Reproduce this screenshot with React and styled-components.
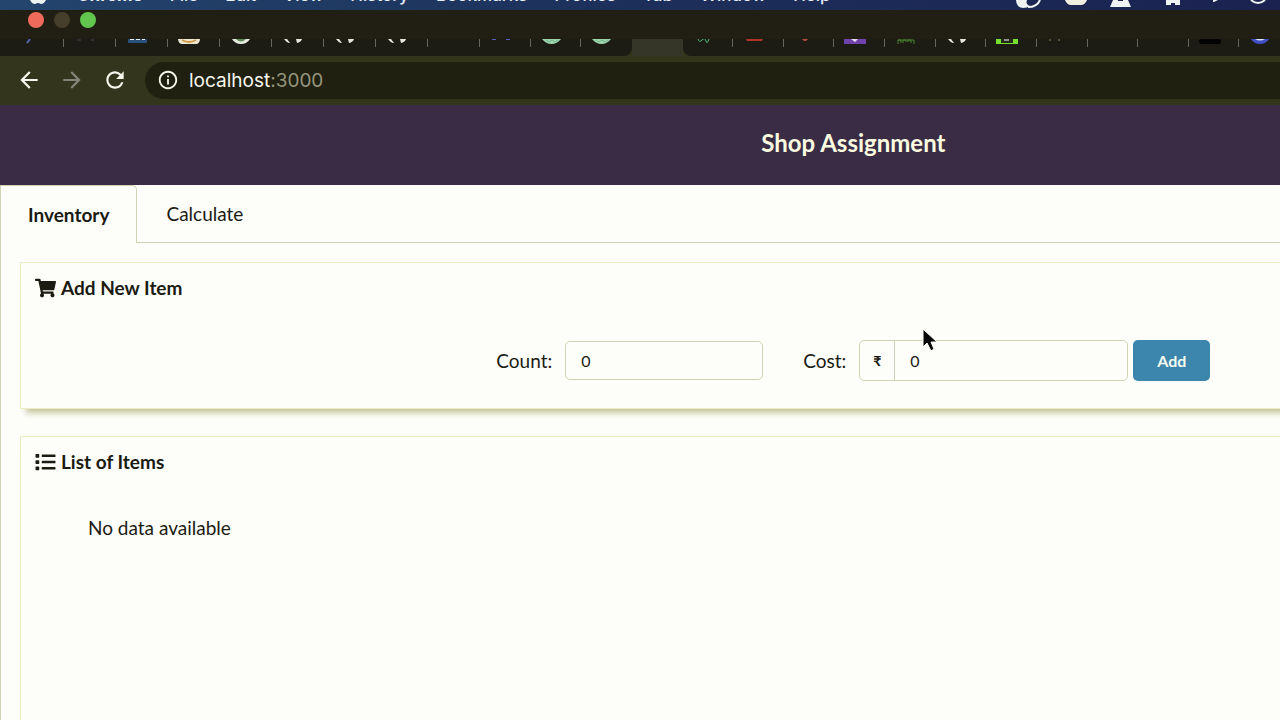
import React from "react";
import styled, { createGlobalStyle, css } from "styled-components";
import { FaShoppingCart, FaList } from "react-icons/fa";
import { MdArrowBack, MdArrowForward, MdRefresh, MdInfoOutline } from "react-icons/md";

const colors = {
  menu: "#1c2f5a",
  titleBar: "#211e14",
  tab: "#1c1c14",
  toolbar: "#33361c",
  address: "#1f2010",
  header: "#392c44",
  page: "#fdfdfa",
  line: "#d2d2b4",
  panelLine: "#ededc4",
  ink: "#1b1b12",
  blue: "#3c85ac",
};

const GlobalStyle = createGlobalStyle`
  *, *::before, *::after { box-sizing: border-box; }
  html, body, #root { height: 100%; }
  body { margin: 0; overflow: hidden; background: ${colors.page}; }
`;

const Screen = styled.div`
  position: relative;
  display: flex;
  flex-direction: column;
  min-height: 100%;
  overflow: hidden;
  font-family: Lato, sans-serif;
  font-size: 19px;
  color: ${colors.ink};
`;

const MenuBar = styled.nav`
  display: flex;
  flex: none;
  align-items: flex-end;
  gap: 27px;
  height: 10px;
  padding: 0 14px 0 30px;
  overflow: hidden;
  background: linear-gradient(90deg, #23456e, ${colors.menu} 50%, #1b2250);
  font-family: Inter, sans-serif;
`;

const MenuItem = styled.span`
  padding-bottom: 3px;
  font-size: 17px;
  font-weight: ${(p) => (p.$strong ? 700 : 500)};
  line-height: 24px;
  color: #e6eef4;
  white-space: nowrap;
`;

const StatusIcons = styled.div`
  display: flex;
  align-self: flex-start;
  gap: 23px;
  margin-left: auto;
`;

const Drawing = styled.svg`
  display: block;
  flex: none;
`;

const AppleMark = styled(Drawing)`
  align-self: flex-start;
`;

const TitleBar = styled.div`
  display: flex;
  flex: none;
  gap: 10px;
  height: 29px;
  padding: 2px 28px;
  background: ${colors.titleBar};
`;

const WindowDot = styled.button`
  width: 16px;
  height: 16px;
  padding: 0;
  border: 0;
  border-radius: 50%;
  background: ${(p) => p.$color};
`;

const TabStrip = styled.div`
  display: flex;
  flex: none;
  height: 17px;
  background: ${colors.toolbar};
`;

const TabGroup = styled.div`
  display: flex;
  flex: ${(p) => (p.$fill ? "1" : "none")};
  margin-right: ${(p) => (p.$fill ? "-10px" : "0")};
  padding-left: ${(p) => (p.$fill ? "0" : "12px")};
  background: ${(p) => (p.$fill ? "transparent" : colors.tab)};
`;

const BrowserTab = styled.div`
  display: flex;
  align-items: flex-start;
  flex: ${(p) => (p.$fill ? "1 0 0" : "0 0 52px")};
  padding-left: 10px;
  background: ${colors.tab};
  ${(p) => p.$active && css`background: #353528;`}
  ${(p) => p.$before && css`border-bottom-right-radius: 8px;`}
  ${(p) => p.$after && css`border-bottom-left-radius: 8px;`}
`;

const TabDivider = styled.span`
  width: 1px;
  height: 8px;
  margin-left: auto;
  background: #65655a;
`;

const Toolbar = styled.div`
  display: flex;
  flex: none;
  align-items: center;
  gap: 17px;
  height: 49px;
  padding: 0 0 1px 16px;
  background: ${colors.toolbar};
`;

const ToolButton = styled.button`
  display: flex;
  padding: 0;
  border: 0;
  background: none;
  font-size: 26px;
  color: ${(p) => (p.$muted ? "#85857c" : "#f6f6ee")};
`;

const AddressBar = styled.div`
  display: flex;
  flex: 1;
  align-items: center;
  gap: 10px;
  height: 37px;
  padding-left: 12px;
  border-radius: 19px 0 0 19px;
  background: ${colors.address};
  font-family: Inter, sans-serif;
  font-size: 19px;
  color: #f8f8ee;
  svg { font-size: 22px; }
`;

const Port = styled.span`
  color: #96967c;
`;

/* The page is laid out wider than the visible window. */
const Page = styled.main`
  display: flex;
  flex: 1;
  flex-direction: column;
  width: calc(100% * 4 / 3);
  background: ${colors.page};
`;

const PageHeader = styled.header`
  display: flex;
  flex: none;
  align-items: center;
  justify-content: center;
  height: 80px;
  padding-bottom: 4px;
  background: ${colors.header};
`;

const PageTitle = styled.h1`
  margin: 0;
  font-size: 24px;
  font-weight: 700;
  line-height: 32px;
  color: #fbfbe0;
`;

const PageTabs = styled.div`
  display: flex;
  flex: none;
  height: 58px;
  border-left: 1px solid ${colors.line};
`;

const PageTab = styled.button`
  padding: 0 27px 0 ${(p) => (p.$active ? "27px" : "29px")};
  border: 0 solid ${colors.line};
  border-width: ${(p) => (p.$active ? "1px 1px 0 0" : "0 0 1px 0")};
  border-radius: ${(p) => (p.$active ? "0 5px 0 0" : "0")};
  background: none;
  font: inherit;
  font-weight: ${(p) => (p.$active ? 700 : 400)};
  color: inherit;
`;

const TabsRule = styled.div`
  flex: 1;
  border-bottom: 1px solid ${colors.line};
`;

const Content = styled.div`
  display: flex;
  flex: 1;
  flex-direction: column;
  gap: 27px;
  padding: 19px 20px 0 19px;
  border-left: 1px solid ${colors.line};
`;

const Panel = styled.section`
  flex: ${(p) => (p.$fill ? "1 0 320px" : "none")};
  padding: 13px 14px 27px;
  border: 1px solid ${colors.panelLine};
  box-shadow: 0 10px 6px -6px #c4c49a;
`;

const PanelTitle = styled.h2`
  display: flex;
  align-items: center;
  gap: 5px;
  margin: 0;
  font-size: 19px;
  font-weight: 700;
  line-height: 24px;
  svg { width: 21px; height: 20px; }
`;

const ItemForm = styled.form`
  display: flex;
  align-items: center;
  justify-content: center;
  margin-top: 40px;
`;

const Field = styled.div`
  display: flex;
  align-items: center;
  gap: 13px;
  margin-right: ${(p) => (p.$wide ? "40px" : "5px")};
`;

const TextInput = styled.input`
  width: 198px;
  height: 39px;
  padding: 0 15px;
  border: 1px solid ${colors.line};
  border-radius: 5px;
  outline: 0;
  background: ${colors.page};
  font: 16px Lato, sans-serif;
  color: inherit;
`;

const MoneyGroup = styled.div`
  display: flex;
  height: 41px;
  border: 1px solid ${colors.line};
  border-radius: 5px;
  ${TextInput} {
    width: 233px;
    border-width: 0 0 0 1px;
    border-radius: 0 5px 5px 0;
  }
`;

const Currency = styled.span`
  width: 34px;
  font-size: 14px;
  font-weight: 700;
  line-height: 40px;
  text-align: center;
`;

const AddButton = styled.button`
  width: 77px;
  height: 41px;
  padding: 0;
  border: 0;
  border-radius: 5px;
  background: ${colors.blue};
  font: 700 16px Lato, sans-serif;
  color: #f6fbf0;
`;

const EmptyMessage = styled.p`
  margin: 42px 53px;
  line-height: 24px;
`;

const Pointer = styled(Drawing)`
  position: absolute;
  top: 328px;
  left: 922px;
`;

const favicons = {
  pen: <path d="M5 4 8 0" stroke="#5665b0" strokeWidth="2" />,
  faint: <path d="M3 1h4M17 1h3" stroke="#543850" strokeWidth="1" />,
  book: (
    <>
      <rect x="2" width="19" height="4" rx="1" fill="#28527c" />
      <path d="M4 0h4M10 0h4M16 0h3" stroke="#e8eef0" strokeWidth="2" />
    </>
  ),
  bowl: (
    <>
      <path d="M0 0h22c0 3-2 5-4 5H4C2 5 0 3 0 0z" fill="#ece8d4" />
      <path d="M4 1q7 4 14 0" stroke="#d09a45" fill="none" strokeWidth="2" />
    </>
  ),
  badge: (
    <>
      <path d="M2 0h18q-3 5-9 5T2 0z" fill="#e6ecdf" />
      <path d="M6 0h10q-5 5-10 0z" fill="#5f8858" />
    </>
  ),
  globe: <path d="M2 0h3l3 4H7Q4 3 2 0zM14 0h6q-1 3-5 4z" fill="#e5e5da" />,
  dots: <path d="M2 0h4M16 0h4" stroke="#595fc0" strokeWidth="2" />,
  leaf: (
    <>
      <path d="M1 0h19q-4 5-9.500 5T1 0z" fill="#9fd6ae" />
      <path d="m5 1 3 2 3-2 3 2 3-2" stroke="#6fb38c" fill="none" />
    </>
  ),
  wave: <path d="M5 0q1 4 4 1t4 1 3-2" stroke="#53b878" fill="none" />,
  red: <path d="M3 0h17l-1 2H4z" fill="#b53228" />,
  pin: <path d="M8 0h6l-2 2h-2z" fill="#b34b40" />,
  purple: (
    <>
      <path d="M0 0h22v5H0z" fill="#7042ad" />
      <path d="M7 0h7l-3 3z" fill="#e9def0" />
    </>
  ),
  grass: <path d="M3 5V1h3v3M8 4V1h3v2M13 3V1h3v3M19 1v4M3 1h16" stroke="#48812d" fill="none" />,
  green: (
    <>
      <path d="M0 0h22v5H0z" fill="#78df2f" />
      <path d="M5 0h12v4H5z" fill="#25291c" />
      <path d="M8 1h5" stroke="#fff" />
    </>
  ),
  sparks: <path d="M2 1h2M11 1h2" stroke="#98814f" />,
  black: <rect width="22" height="5" rx="2" fill="#020203" />,
  blue: (
    <>
      <path d="M2 0h18q-3 5-9 5T2 0z" fill="#3f4fc4" />
      <path d="M6 0h10q-5 3-10 0z" fill="#dfe2f4" />
    </>
  ),
};

const leadingTabs = ["pen", "faint", "book", "bowl", "badge", "globe", "globe", "globe", ""];
const trailingTabs = [
  "dots", "leaf", "leaf", "active", "wave", "red", "pin", "purple",
  "grass", "globe", "green", "sparks", "", "", "black", "blue",
];
const activeIndex = trailingTabs.indexOf("active");
const menus = ["File", "Edit", "View", "History", "Bookmarks", "Profiles", "Tab", "Window", "Help"];

function Tab({ icon, index, fill }) {
  const active = fill && index === activeIndex;
  const before = fill && index === activeIndex - 1;
  return (
    <BrowserTab
      $fill={fill}
      $active={active}
      $before={before}
      $after={fill && index === activeIndex + 1}
    >
      <Drawing width="22" height="5" fill="none" aria-hidden="true">{favicons[icon]}</Drawing>
      {!active && !before && <TabDivider />}
    </BrowserTab>
  );
}

export default function App() {
  return (
    <Screen>
      <GlobalStyle />
      <MenuBar>
        <AppleMark width="20" height="4" aria-hidden="true">
          <path d="M0 0h16q-2 4-5 4-2-1-3-1T5 4Q2 4 0 0z" fill="#eef4f2" />
        </AppleMark>
        <MenuItem $strong>Chrome</MenuItem>
        {menus.map((name) => <MenuItem key={name}>{name}</MenuItem>)}
        <StatusIcons aria-hidden="true">
          <Drawing width="27" height="9">
            <path d="M1 0h11q-2 4 3 6-3 2-7 2Q1 7 1 0z" fill="#eff3f2" />
            <path d="M25 0q-3 7-12 7" stroke="#eff3f2" strokeWidth="2" fill="none" />
          </Drawing>
          <Drawing width="22" height="9"><path d="M0 0h22q-2 5-6 5H6Q2 5 0 0z" fill="#f0efe0" /></Drawing>
          <Drawing width="30" height="9">
            <path d="M3 0h15l3 7H0z" fill="#eff3f2" />
            <path d="M8 0h5v1H8z" fill="#1b2250" />
          </Drawing>
          <Drawing width="24" height="9"><path d="M3 0h14v5h-5V3H8v2H3z" fill="#eff3f2" /></Drawing>
          <Drawing width="17" height="9"><path d="M3 0h5L4 2H3z" fill="#eff3f2" /></Drawing>
          <Drawing width="16" height="9"><path d="M1 0q7 6 14 0" stroke="#eff3f2" strokeWidth="2" fill="none" /></Drawing>
        </StatusIcons>
      </MenuBar>
      <TitleBar>
        <WindowDot $color="#ee6a5a" aria-label="Close" />
        <WindowDot $color="#453f2c" aria-label="Minimise" />
        <WindowDot $color="#62c64e" aria-label="Zoom" />
      </TitleBar>
      <TabStrip>
        <TabGroup>
          {leadingTabs.map((icon, i) => <Tab key={i} icon={icon} index={i} />)}
        </TabGroup>
        <TabGroup $fill>
          {trailingTabs.map((icon, i) => <Tab key={i} icon={icon} index={i} fill />)}
        </TabGroup>
      </TabStrip>
      <Toolbar>
        <ToolButton aria-label="Back"><MdArrowBack /></ToolButton>
        <ToolButton $muted aria-label="Forward"><MdArrowForward /></ToolButton>
        <ToolButton aria-label="Reload"><MdRefresh /></ToolButton>
        <AddressBar>
          <MdInfoOutline />
          <span>localhost<Port>:3000</Port></span>
        </AddressBar>
      </Toolbar>
      <Page>
        <PageHeader><PageTitle>Shop Assignment</PageTitle></PageHeader>
        <PageTabs>
          <PageTab $active>Inventory</PageTab>
          <PageTab>Calculate</PageTab>
          <TabsRule />
        </PageTabs>
        <Content>
          <Panel>
            <PanelTitle><FaShoppingCart />Add New Item</PanelTitle>
            <ItemForm onSubmit={(e) => e.preventDefault()}>
              <Field $wide>
                <label htmlFor="count">Count:</label>
                <TextInput id="count" defaultValue="0" />
              </Field>
              <Field>
                <label htmlFor="cost">Cost:</label>
                <MoneyGroup>
                  <Currency>₹</Currency>
                  <TextInput id="cost" defaultValue="0" />
                </MoneyGroup>
              </Field>
              <AddButton type="submit">Add</AddButton>
            </ItemForm>
          </Panel>
          <Panel $fill>
            <PanelTitle><FaList />List of Items</PanelTitle>
            <EmptyMessage>No data available</EmptyMessage>
          </Panel>
        </Content>
      </Page>
      <Pointer width="16" height="25" viewBox="0 0 16 25" aria-hidden="true">
        <path d="M1 1v18l4-4 4 8 3-2-3-7h6z" fill="#080808" stroke="#fdfdfa" />
      </Pointer>
    </Screen>
  );
}
